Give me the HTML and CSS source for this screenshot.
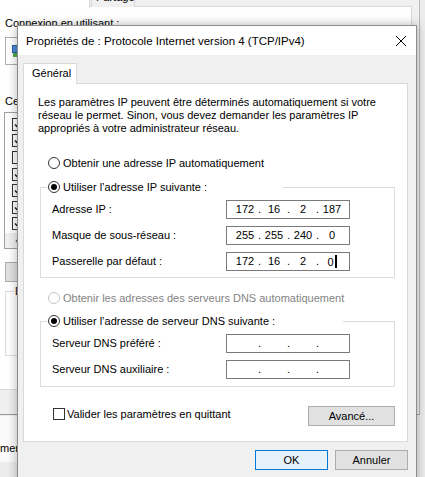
FILE: index.html
```html
<!DOCTYPE html>
<html lang="fr">
<head>
    <meta charset="UTF-8">
    <meta name="viewport" content="width=device-width, initial-scale=1.0">
    <title>Propriétés de : Protocole Internet version 4 (TCP/IPv4)</title>
    <link rel="stylesheet" href="styles.css">
</head>
<body>

<!-- fenêtre Wi-Fi derrière la boîte de dialogue -->
<div class="backWindow">
    <div class="backTabs">
        <div class="backTab backTabActive">Gestion de réseau</div>
        <div class="backTab">Partage</div>
    </div>
    <div class="backPanel">
        <div class="backLabel">Connexion en utilisant :</div>
        <div class="adapterBox">
            <svg width="16" height="16" viewBox="0 0 16 16">
                <rect x="0.5" y="2.5" width="9" height="7" fill="#4a8ad8" stroke="#2d5f9e"/>
                <rect x="1" y="10" width="8" height="4" fill="#4cae4c"/>
            </svg>
        </div>
        <div class="backLabel backLabelGap">Ce</div>
        <div class="itemList">
            <div class="item"><span class="chk"><svg width="11" height="11" viewBox="0 0 11 11"><path d="M2 5.5 L4.5 8 L9 2.5" fill="none" stroke="#222" stroke-width="1.6"/></svg></span></div>
            <div class="item"><span class="chk"><svg width="11" height="11" viewBox="0 0 11 11"><path d="M2 5.5 L4.5 8 L9 2.5" fill="none" stroke="#222" stroke-width="1.6"/></svg></span></div>
            <div class="item"><span class="chk"></span></div>
            <div class="item"><span class="chk"><svg width="11" height="11" viewBox="0 0 11 11"><path d="M2 5.5 L4.5 8 L9 2.5" fill="none" stroke="#222" stroke-width="1.6"/></svg></span></div>
            <div class="item"><span class="chk"><svg width="11" height="11" viewBox="0 0 11 11"><path d="M2 5.5 L4.5 8 L9 2.5" fill="none" stroke="#222" stroke-width="1.6"/></svg></span></div>
            <div class="item"><span class="chk"><svg width="11" height="11" viewBox="0 0 11 11"><path d="M2 5.5 L4.5 8 L9 2.5" fill="none" stroke="#222" stroke-width="1.6"/></svg></span></div>
            <div class="item"><span class="chk"><svg width="11" height="11" viewBox="0 0 11 11"><path d="M2 5.5 L4.5 8 L9 2.5" fill="none" stroke="#222" stroke-width="1.6"/></svg></span></div>
            <div class="hScroll">
                <svg width="6" height="8" viewBox="0 0 6 8"><path d="M5 0.5 L1.5 4 L5 7.5" fill="none" stroke="#606060" stroke-width="1.5"/></svg>
            </div>
        </div>
        <div class="backButtons">
            <div class="button"></div>
        </div>
        <fieldset class="backGroup">
            <legend>D</legend>
        </fieldset>
    </div>
</div>

<div class="otherWindow">mer</div>

<!-- boîte de dialogue IPv4 -->
<div class="dialog">
    <div class="titleBar">
        <span>Propriétés de : Protocole Internet version 4 (TCP/IPv4)</span>
        <svg class="closeIcon" width="10" height="10" viewBox="0 0 10 10">
            <path d="M0 0 L10 10 M10 0 L0 10" stroke="#000" stroke-width="1"/>
        </svg>
    </div>

    <div class="dialogBody">
        <div class="tabs">
            <div class="tab">Général</div>
        </div>

        <div class="panel">
            <p class="intro">Les paramètres IP peuvent être déterminés automatiquement si votre<br>réseau le permet. Sinon, vous devez demander les paramètres IP<br>appropriés à votre administrateur réseau.</p>

            <div class="radioRow firstRadio">
                <span class="radio"></span>
                <span>Obtenir une adresse IP automatiquement</span>
            </div>

            <fieldset class="group groupIp">
                <legend>
                    <div class="radioRow">
                        <span class="radio checked"></span>
                        <span>Utiliser l’adresse IP suivante :</span>
                    </div>
                </legend>
                <div class="fieldRow">
                    <span class="fieldLabel">Adresse IP :</span>
                    <div class="ipField"><span class="seg">172</span><span class="dot">.</span><span class="seg">16</span><span class="dot">.</span><span class="seg">2</span><span class="dot">.</span><span class="seg">187</span></div>
                </div>
                <div class="fieldRow">
                    <span class="fieldLabel">Masque de sous-réseau :</span>
                    <div class="ipField"><span class="seg">255</span><span class="dot">.</span><span class="seg">255</span><span class="dot">.</span><span class="seg">240</span><span class="dot">.</span><span class="seg">0</span></div>
                </div>
                <div class="fieldRow">
                    <span class="fieldLabel">Passerelle par défaut :</span>
                    <div class="ipField"><span class="seg">172</span><span class="dot">.</span><span class="seg">16</span><span class="dot">.</span><span class="seg">2</span><span class="dot">.</span><span class="seg">0<span class="caret"></span></span></div>
                </div>
            </fieldset>

            <div class="radioRow dnsRadio">
                <span class="radio disabled"></span>
                <span class="disabledText">Obtenir les adresses des serveurs DNS automatiquement</span>
            </div>

            <fieldset class="group groupDns">
                <legend>
                    <div class="radioRow">
                        <span class="radio checked"></span>
                        <span>Utiliser l’adresse de serveur DNS suivante :</span>
                    </div>
                </legend>
                <div class="fieldRow">
                    <span class="fieldLabel">Serveur DNS préféré :</span>
                    <div class="ipField"><span class="seg"></span><span class="dot">.</span><span class="seg"></span><span class="dot">.</span><span class="seg"></span><span class="dot">.</span><span class="seg"></span></div>
                </div>
                <div class="fieldRow">
                    <span class="fieldLabel">Serveur DNS auxiliaire :</span>
                    <div class="ipField"><span class="seg"></span><span class="dot">.</span><span class="seg"></span><span class="dot">.</span><span class="seg"></span><span class="dot">.</span><span class="seg"></span></div>
                </div>
            </fieldset>

            <div class="bottomRow">
                <div class="checkRow">
                    <span class="checkbox"></span>
                    <span>Valider les paramètres en quittant</span>
                </div>
                <div class="button advanced">Avancé...</div>
            </div>
        </div>

        <div class="dialogButtons">
            <div class="button default">OK</div>
            <div class="button">Annuler</div>
        </div>
    </div>
</div>

</body>
</html>
```

FILE: styles.css
```css
body {
    margin: 0;
    width: 425px;
    height: 477px;
    overflow: hidden;
    position: relative;
    background-color: #ececec;
    font-family: "Liberation Sans", Arial, sans-serif;
    font-size: 11px;
    color: #000;
}

/* fenêtre de fond */
.backWindow {
    position: absolute;
    left: -12px;
    top: -14px;
    width: 431px;
    height: 428px;
    background-color: #f0f0f0;
    border-right: 1px solid #b9b9b9;
    border-bottom: 1px solid #9a9a9a;
}

.backTabs {
    display: flex;
    height: 21px;
    padding-left: 2px;
}

.backTab {
    box-sizing: border-box;
    width: 44px;
    height: 18px;
    margin-top: 3px;
    margin-left: 1px;
    border: 1px solid #d9d9d9;
    border-bottom: none;
    background-color: #f0f0f0;
    padding-left: 4px;
    line-height: 14px;
}

.backTabActive {
    width: 100px;
    height: 22px;
    margin-top: 0;
    margin-left: 0;
    background-color: #fff;
    padding-left: 8px;
    line-height: 18px;
    position: relative;
    z-index: 1;
}

.backPanel {
    box-sizing: border-box;
    height: 384px;
    width: 420px;
    margin-top: -1px;
    margin-left: 4px;
    border: 1px solid #d9d9d9;
    background-color: #fff;
    padding: 10px 0 0 12px;
}

.backLabel {
    line-height: 13px;
}

.backLabelGap {
    margin-top: 30px;
}

.adapterBox {
    box-sizing: border-box;
    height: 28px;
    width: 395px;
    margin-top: 7px;
    border: 1px solid #adadad;
    display: flex;
    align-items: center;
    gap: 6px;
    padding-left: 6px;
}

.itemList {
    box-sizing: border-box;
    height: 137px;
    width: 395px;
    margin-top: 4px;
    margin-left: -1px;
    border: 1px solid #a0a0a0;
    padding-top: 3px;
    display: flex;
    flex-direction: column;
}

.item {
    height: 16.6px;
    display: flex;
    align-items: center;
    gap: 5px;
    padding-left: 7px;
}

.chk {
    box-sizing: border-box;
    width: 13px;
    height: 13px;
    border: 1px solid #333;
    background-color: #fff;
    display: flex;
    align-items: center;
    justify-content: center;
}

.hScroll {
    margin-top: auto;
    height: 15px;
    background-color: #f0f0f0;
    display: flex;
    align-items: center;
    padding-left: 10px;
}

.backButtons {
    margin-top: 13px;
}

.backButtons .button {
    width: 90px;
}

.backGroup {
    box-sizing: border-box;
    margin: 3px 0 0 0;
    width: 395px;
    height: 71px;
    padding: 0 0 0 8px;
    border: 1px solid #dcdcdc;
    min-inline-size: 0;
}

.backGroup legend {
    padding: 0 1px;
    line-height: 13px;
}

.otherWindow {
    position: absolute;
    left: 0;
    top: 416px;
    width: 60px;
    height: 46px;
    box-sizing: border-box;
    background-color: #fafafa;
    padding-top: 26px;
    line-height: 13px;
}

/* boîte de dialogue */
.dialog {
    position: absolute;
    left: 17px;
    top: 25px;
    width: 400px;
    height: 470px;
    box-sizing: border-box;
    background-color: #f0f0f0;
    border: 1px solid #8c8c8c;
    box-shadow: 0 0 10px rgba(0, 0, 0, 0.3);
}

.titleBar {
    height: 29px;
    background-color: #fff;
    display: flex;
    align-items: center;
    justify-content: space-between;
    padding: 0 10px 0 8px;
    font-size: 11.5px;
}

.dialogBody {
    padding: 8px 8px 0 5px;
}

.tabs {
    display: flex;
}

.tab {
    box-sizing: border-box;
    width: 54px;
    height: 21px;
    border: 1px solid #d9d9d9;
    border-bottom: none;
    background-color: #fff;
    padding-left: 8px;
    line-height: 19px;
    margin-bottom: -1px;
    position: relative;
    z-index: 1;
}

.panel {
    box-sizing: border-box;
    height: 359px;
    border: 1px solid #d9d9d9;
    background-color: #fff;
    padding: 12px 12px 0 14px;
}

.intro {
    margin: 0;
    line-height: 13px;
}

.radioRow {
    display: flex;
    align-items: center;
    height: 16px;
    gap: 3px;
}

.firstRadio {
    margin-top: 20px;
    margin-left: 10px;
}

.dnsRadio {
    margin-top: 12px;
    margin-left: 10px;
}

.radio {
    box-sizing: border-box;
    width: 12px;
    height: 12px;
    border: 1px solid #333;
    border-radius: 50%;
    background-color: #fff;
    display: flex;
    align-items: center;
    justify-content: center;
}

.radio.checked::after {
    content: "";
    width: 6px;
    height: 6px;
    border-radius: 50%;
    background-color: #000;
}

.radio.disabled {
    border-color: #c4c4c4;
}

.disabledText {
    color: #838383;
}

.group {
    margin: 8px 0 0 2px;
    padding: 1px 0 3px 6px;
    border: 1px solid #dcdcdc;
    min-inline-size: 0;
}

.group legend {
    width: 235px;
    padding: 0 0 0 1px;
}

.groupDns {
    margin-top: 7px;
    padding-bottom: 4px;
}

.groupDns legend {
    width: 295px;
}

.fieldRow {
    display: flex;
    align-items: center;
    height: 26px;
    padding-left: 5px;
}

.fieldLabel {
    width: 174px;
}

.ipField {
    box-sizing: border-box;
    width: 124px;
    height: 19px;
    border: 1px solid #7a7a7a;
    background-color: #fff;
    display: flex;
    align-items: center;
    padding-left: 6px;
}

.seg {
    width: 24px;
    text-align: center;
}

.dot {
    width: 5px;
    text-align: center;
}

.caret {
    display: inline-block;
    width: 2px;
    height: 13px;
    margin-left: 1px;
    background-color: #000;
    vertical-align: -2px;
}

.bottomRow {
    margin-top: 19px;
    display: flex;
    justify-content: space-between;
    align-items: flex-start;
}

.checkRow {
    display: flex;
    align-items: center;
    height: 16px;
    gap: 2px;
    margin-left: 15px;
}

.checkbox {
    box-sizing: border-box;
    width: 12px;
    height: 12px;
    border: 1px solid #333;
    background-color: #fff;
}

.button {
    box-sizing: border-box;
    height: 20px;
    border: 1px solid #adadad;
    background-color: #e1e1e1;
    display: flex;
    align-items: center;
    justify-content: center;
}

.advanced {
    width: 87px;
}

.dialogButtons {
    display: flex;
    justify-content: flex-end;
    gap: 7px;
    margin-top: 8px;
}

.dialogButtons .button {
    width: 73px;
}

.button.default {
    background-color: #e5f1fb;
    border-color: #0078d7;
}
```
